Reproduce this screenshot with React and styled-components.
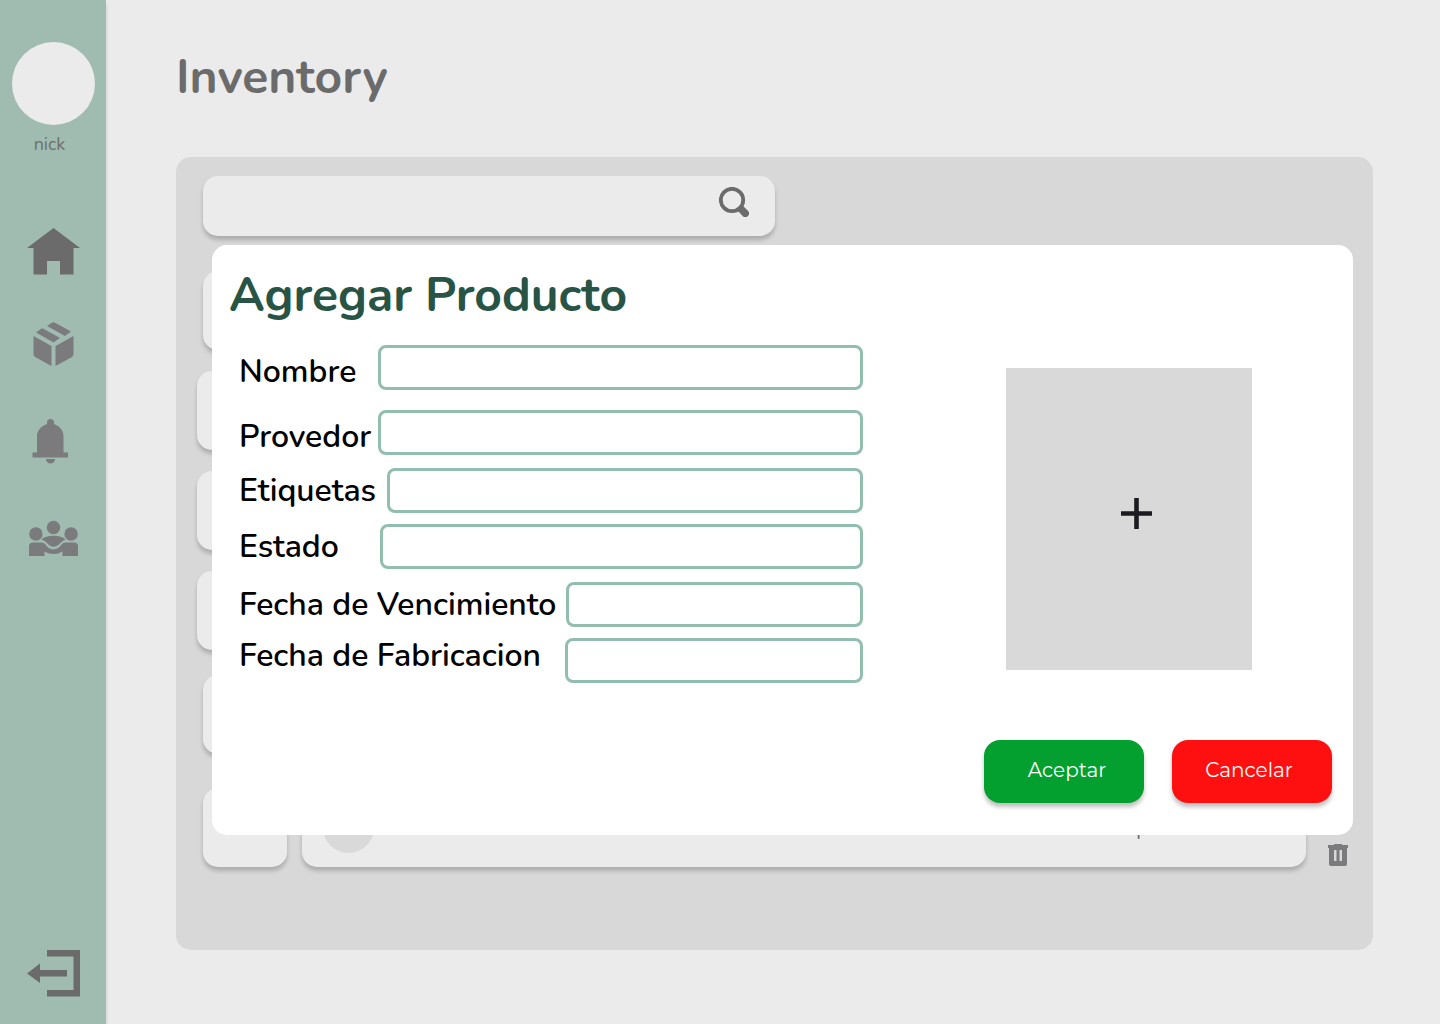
import React from "react";
import styled, { createGlobalStyle } from "styled-components";

const GlobalStyle = createGlobalStyle`
  *, *::before, *::after { box-sizing: border-box; }
  body { margin: 0; background: #ebebeb; font-family: Nunito, Lato, sans-serif; }
  button, input { font: inherit; }
  svg { display: block; flex: none; }
`;

const Shell = styled.div`
  display: flex;
  min-height: 100vh;
`;

const Sidebar = styled.aside`
  display: flex;
  flex-direction: column;
  align-items: center;
  flex: none;
  width: 106px;
  padding: 42px 0 27px;
  background: #a0bcb0;
  box-shadow: 0 4px 4px rgba(0, 0, 0, 0.15);
  color: #6e6e6e;
`;

const Profile = styled.div`
  display: flex;
  flex-direction: column;
  align-items: center;
  padding-left: 1px;
`;

const ProfileImage = styled.div`
  width: 83px;
  height: 83px;
  border-radius: 50%;
  background: #ebebeb;
`;

const ProfileName = styled.span`
  margin-top: 7px;
  padding-right: 8px;
  font-size: 18px;
  line-height: 24px;
`;

const Nav = styled.nav`
  display: flex;
  flex-direction: column;
  align-items: center;
  margin-top: 72px;
`;

const NavLink = styled.a`
  margin-bottom: ${(p) => p.$space || 0}px;
  color: ${(p) => (p.$active ? "#6b6b6b" : "#7b7a7d")};
`;

const ExitButton = styled.button`
  margin-top: auto;
  padding: 0;
  border: 0;
  background: none;
  color: #6b6b6b;
`;

const Main = styled.main`
  display: flex;
  flex: 1;
  flex-direction: column;
  min-width: 0;
  padding: 45px 67px 74px 70px;
`;

const PageTitle = styled.h1`
  margin: 0 0 48px;
  color: #6b6b6b;
  font-size: 48px;
  font-weight: 700;
  line-height: 64px;
`;

const Panel = styled.section`
  position: relative;
  flex: 1;
  padding: 19px 25px 80px 20px;
  border-radius: 15px;
  background: #d8d8d8;
`;

const SearchBar = styled.form`
  display: flex;
  align-items: flex-start;
  width: 572px;
  height: 60px;
  margin: 0 0 35px 7px;
  border-radius: 15px;
  background: #ebebeb;
  box-shadow: 0 4px 4px rgba(0, 0, 0, 0.2);
`;

const SearchInput = styled.input`
  flex: 1;
  min-width: 0;
  height: 60px;
  padding: 0 20px;
  border: 0;
  outline: 0;
  background: none;
  color: #6b6b6b;
  font-size: 20px;
`;

const SearchButton = styled.button`
  padding: 11px 26px 0 0;
  border: 0;
  background: none;
  color: #6b6b6b;
`;

const List = styled.ul`
  margin: 0;
  padding: 0;
  list-style: none;
`;

const Item = styled.li`
  display: flex;
  gap: 15px;
  height: 79px;
  margin-top: ${(p) => p.$space}px;
  padding-left: ${(p) => (p.$indent ? 7 : 1)}px;
`;

const Card = styled.div`
  flex: none;
  width: 84px;
  border-radius: 15px;
  background: #ebebeb;
  box-shadow: 0 4px 4px rgba(0, 0, 0, 0.2);
`;

const WideCard = styled(Card)`
  display: flex;
  align-items: center;
  flex: 1;
  padding: 0 116px 0 21px;
`;

const Thumb = styled.div`
  width: 51px;
  height: 51px;
  border-radius: 50%;
  background: #d9d9d9;
`;

const ItemText = styled.span`
  margin-left: auto;
  padding-top: 2px;
  color: #6b6b6b;
  font-size: 20px;
  line-height: 24px;
`;

const DeleteButton = styled.button`
  align-self: flex-end;
  padding: 0 0 0 7px;
  border: 0;
  background: none;
  color: #7b7a7d;
`;

const Dialog = styled.div`
  position: absolute;
  top: 88px;
  right: 20px;
  left: 36px;
  padding: 18px 21px 32px 17px;
  border-radius: 15px;
  background: #fff;
`;

const DialogTitle = styled.h2`
  margin: 0;
  color: #285445;
  font-size: 48px;
  font-weight: 700;
  line-height: 64px;
`;

const DialogBody = styled.div`
  display: flex;
  justify-content: space-between;
  gap: 24px;
  padding: 18px 80px 0 10px;
`;

const Fields = styled.div`
  flex: 1;
  min-width: 0;
  max-width: 624px;
`;

const Field = styled.div`
  display: flex;
  align-items: ${(p) => p.$align || "center"};
  height: 45px;
  margin-bottom: ${(p) => p.$space}px;
`;

const FieldLabel = styled.label`
  flex: none;
  width: ${(p) => p.$width}px;
  color: #000;
  font-size: 32px;
  font-weight: 600;
  line-height: 36px;
  white-space: nowrap;
`;

const FieldInput = styled.input`
  flex: 1;
  min-width: 0;
  height: 45px;
  padding: 0 12px;
  border: 3px solid #92bfad;
  border-radius: 8px;
  outline: 0;
  background: #fff;
  font-size: 24px;
`;

const ImagePicker = styled.button`
  display: flex;
  align-items: center;
  justify-content: center;
  width: 246px;
  height: 302px;
  margin-top: 23px;
  padding: 0 0 11px 15px;
  border: 0;
  background: #d9d9d9;
  color: #1c1b1f;
`;

const Actions = styled.div`
  display: flex;
  justify-content: flex-end;
  gap: 28px;
  margin-top: 57px;
`;

const ActionButton = styled.button`
  width: 160px;
  height: 63px;
  padding: ${(p) => (p.$danger ? "0 6px 4px 0" : "0 0 4px 6px")};
  border: 0;
  border-radius: 16px;
  background: ${(p) => (p.$danger ? "#ff1010" : "#03a02f")};
  box-shadow: 0 4px 4px rgba(0, 0, 0, 0.25);
  color: #fff;
  font-family: Montserrat, "Open Sans", sans-serif;
  font-size: 20px;
  font-weight: 400;
  line-height: 24px;
`;

const HomeIcon = () => (
  <svg width="53" height="47" viewBox="0 0 53 47" fill="currentColor" aria-hidden="true">
    <path d="M26.500 0 53 20H46.500V46.500H33V33H20V46.500H6.500V20H0Z" />
  </svg>
);

const BoxIcon = () => (
  <svg width="41" height="44" viewBox="0 0 41 44" fill="currentColor" aria-hidden="true">
    <path d="M14 4 18.500 1Q20.500-.5 22.500 1L38 9.500 32 14ZM3 10.500 8.500 6.500 10 6.500 27 16 20.500 20.500ZM.5 14 18.500 24V44L2 35Q.5 34 .5 32ZM40.500 14V32Q40.500 34 39 35L22.500 44V24Z" />
  </svg>
);

const BellIcon = () => (
  <svg width="42" height="45" viewBox="0 0 42 45" fill="currentColor" aria-hidden="true">
    <path d="M15 5V3.500A3.500 3.500 0 0 1 22 3.500V5C28 7 31.500 12 31.500 17V33.500H36V38.500H.5V33.500H5V17C5 12 9 7 15 5ZM14 40H23A4.500 4.500 0 0 1 14 40Z" />
  </svg>
);

const PeopleIcon = () => (
  <svg width="49" height="37" viewBox="0 0 49 37" fill="currentColor" aria-hidden="true">
    <circle cx="24.500" cy="7.500" r="6.700" />
    <circle cx="6.900" cy="14" r="6.700" />
    <circle cx="42.100" cy="14" r="6.700" />
    <path d="M12.500 19.500C17 14.500 32 14.500 36.500 19.500Q33.500 20.500 31.500 23C27 28 22 28 18 23Q16 20.500 12.500 19.500Z" />
    <path d="M0 36V26Q0 22.500 4 22.500H12.500Q15 22.500 16.500 24.500C21 31 28 31 32.500 24.500Q34 22.500 36.500 22.500H45Q49 22.500 49 26V36H33.500V31.500Q24.500 36.500 15.500 31.500V36Z" />
  </svg>
);

const ExitIcon = () => (
  <svg width="53" height="47" viewBox="0 0 53 47" fill="currentColor" aria-hidden="true">
    <path d="M20 0H53V46.500H20V40H46.500V6.500H20ZM0 23.500 13 13.500V20H40V26.500H13V33Z" />
  </svg>
);

const SearchIcon = () => (
  <svg width="30" height="30" viewBox="0 0 30 30" fill="none" stroke="currentColor" aria-hidden="true">
    <circle cx="13" cy="13" r="11.200" strokeWidth="3.800" />
    <path d="M22.500 22.500 26.300 26.300" strokeWidth="7.400" strokeLinecap="round" />
  </svg>
);

const TrashIcon = () => (
  <svg width="20" height="24" viewBox="0 0 20 24" fill="currentColor" aria-hidden="true">
    <path fillRule="evenodd" d="M0 2H6V1H14V2H20V5H19V21Q19 23 17 23H3Q1 23 1 21V5H0ZM6 7V18H8.500V7ZM11.500 7V18H14V7Z" />
  </svg>
);

const PlusIcon = () => (
  <svg width="31" height="31" viewBox="0 0 31 31" fill="currentColor" aria-hidden="true">
    <path d="M13.200 0H17.800V13.200H31V17.800H17.800V31H13.200V17.800H0V13.200H13.200Z" />
  </svg>
);

const items = [
  { id: 1, space: 0, indent: true },
  { id: 2, space: 21 },
  { id: 3, space: 21 },
  { id: 4, space: 21 },
  { id: 5, space: 25, indent: true },
  { id: 6, space: 34, indent: true, tag: "Etiquetas" },
];

const fields = [
  { id: "nombre", label: "Nombre", width: 139, space: 20, align: "flex-end" },
  { id: "provedor", label: "Provedor", width: 139, space: 13, align: "flex-end" },
  { id: "etiquetas", label: "Etiquetas", width: 148, space: 11 },
  { id: "estado", label: "Estado", width: 141, space: 13 },
  { id: "vencimiento", label: "Fecha de Vencimiento", width: 327, space: 11 },
  { id: "fabricacion", label: "Fecha de Fabricacion", width: 326, space: 0, align: "flex-start" },
];

export default function App() {
  return (
    <Shell>
      <GlobalStyle />
      <Sidebar>
        <Profile>
          <ProfileImage />
          <ProfileName>nick</ProfileName>
        </Profile>
        <Nav aria-label="Principal">
          <NavLink href="#home" aria-label="Home" $active $space={47}><HomeIcon /></NavLink>
          <NavLink href="#inventory" aria-label="Inventory" $space={53}><BoxIcon /></NavLink>
          <NavLink href="#alerts" aria-label="Alerts" $space={56}><BellIcon /></NavLink>
          <NavLink href="#people" aria-label="People"><PeopleIcon /></NavLink>
        </Nav>
        <ExitButton type="button" aria-label="Exit"><ExitIcon /></ExitButton>
      </Sidebar>
      <Main>
        <PageTitle>Inventory</PageTitle>
        <Panel>
          <SearchBar role="search">
            <SearchInput type="text" aria-label="Search" />
            <SearchButton type="button" aria-label="Search"><SearchIcon /></SearchButton>
          </SearchBar>
          <List>
            {items.map((item) => (
              <Item key={item.id} $space={item.space} $indent={item.indent}>
                <Card />
                <WideCard>
                  <Thumb />
                  {item.tag && <ItemText>{item.tag}</ItemText>}
                </WideCard>
                <DeleteButton type="button" aria-label="Delete"><TrashIcon /></DeleteButton>
              </Item>
            ))}
          </List>
          <Dialog role="dialog" aria-labelledby="dialog-title">
            <DialogTitle id="dialog-title">Agregar Producto</DialogTitle>
            <DialogBody>
              <Fields>
                {fields.map((field) => (
                  <Field key={field.id} $space={field.space} $align={field.align}>
                    <FieldLabel htmlFor={field.id} $width={field.width}>{field.label}</FieldLabel>
                    <FieldInput id={field.id} type="text" />
                  </Field>
                ))}
              </Fields>
              <ImagePicker type="button" aria-label="Add image"><PlusIcon /></ImagePicker>
            </DialogBody>
            <Actions>
              <ActionButton type="button">Aceptar</ActionButton>
              <ActionButton type="button" $danger>Cancelar</ActionButton>
            </Actions>
          </Dialog>
        </Panel>
      </Main>
    </Shell>
  );
}
